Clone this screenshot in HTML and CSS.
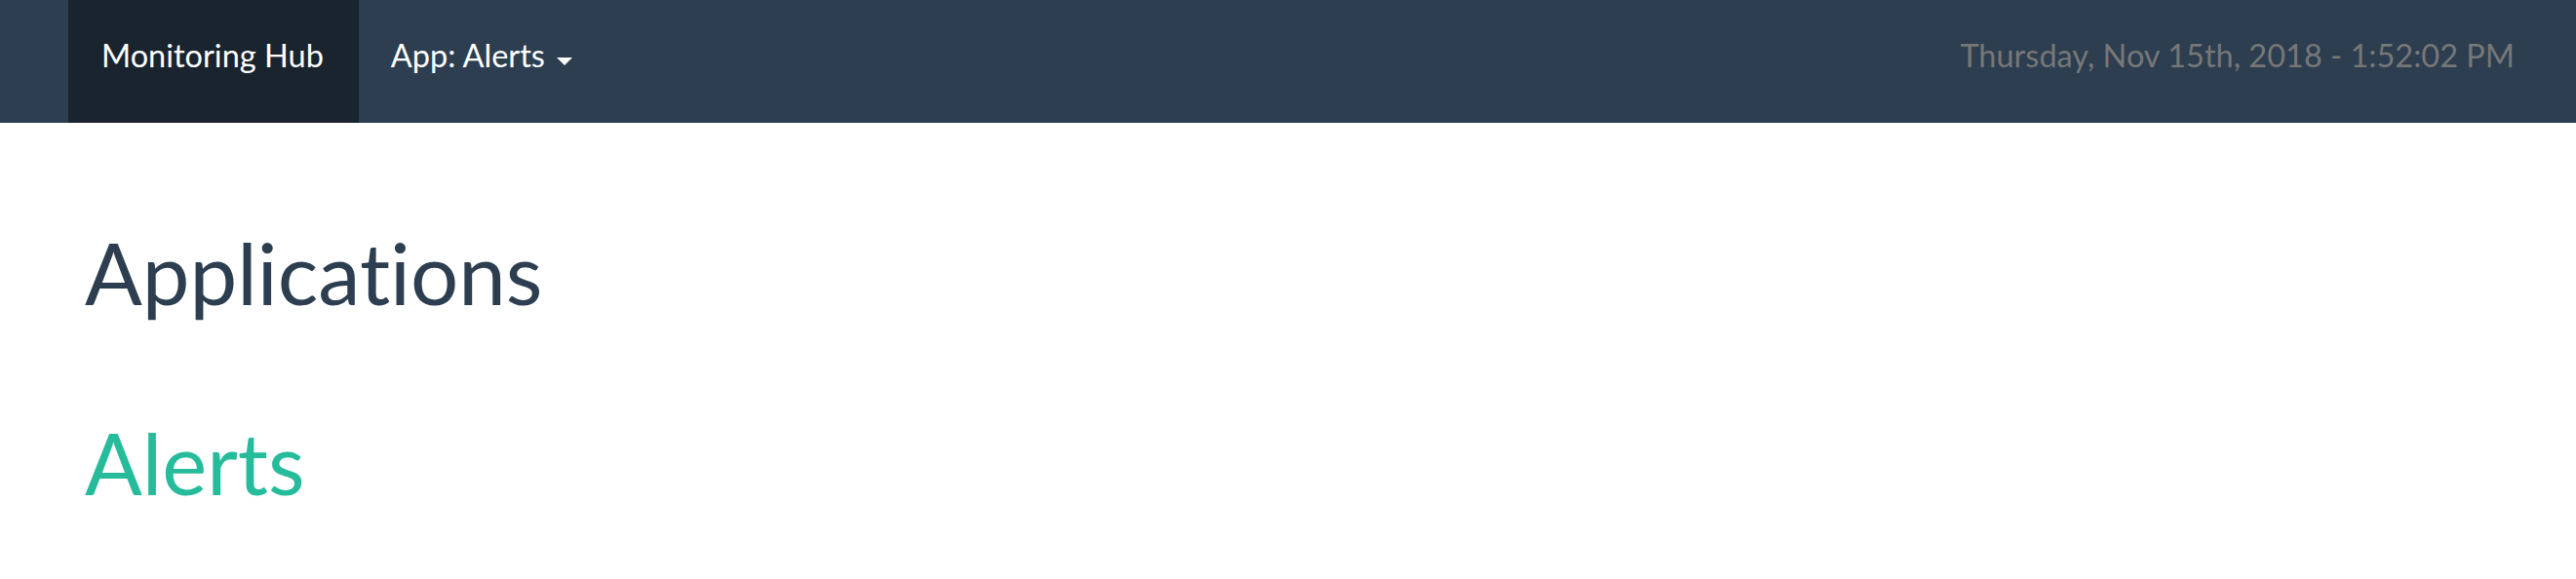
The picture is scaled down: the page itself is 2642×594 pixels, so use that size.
FILE: index.html
```html
<!DOCTYPE html>
<html lang="en">
<head>
<meta charset="utf-8">
<title>Monitoring Hub</title>
<link rel="stylesheet" href="styles.css">
</head>
<body>
<nav class="navbar">
  <a class="brand" href="#">Monitoring Hub</a>
  <a class="nav-link" href="#">App: Alerts <span class="caret"></span></a>
  <div class="spacer"></div>
  <div class="clock">Thursday, Nov 15th, 2018 - 1:52:02 PM</div>
</nav>
<main class="content">
  <h1 class="title">Applications</h1>
  <h2 class="app">Alerts</h2>
</main>
</body>
</html>
```

FILE: styles.css
```css
* { box-sizing: border-box; }
html, body {
  margin: 0;
  padding: 0;
  background: #ffffff;
  font-family: Lato, "Open Sans", sans-serif;
  font-variant-ligatures: none;
}
.navbar {
  display: flex;
  align-items: stretch;
  height: 126px;
  background: #2c3e50;
  padding-left: 70px;
}
.brand, .nav-link, .clock {
  font-size: 32.5px;
  line-height: 42px;
  padding-top: 36px;
  text-decoration: none;
}
.brand {
  background: #1a242f;
  color: #ffffff;
  padding-left: 34px;
  padding-right: 36px;
}
.nav-link {
  color: #ffffff;
  padding-left: 33px;
  padding-right: 30px;
  display: flex;
  align-items: flex-start;
}
.caret {
  display: inline-block;
  width: 0;
  height: 0;
  margin-left: 12px;
  margin-top: 23px;
  border-top: 8px solid #ffffff;
  border-left: 8.5px solid transparent;
  border-right: 8.5px solid transparent;
}
.spacer { flex: 1; }
.clock {
  color: #777777;
  padding-right: 63px;
}
.content {
  padding-left: 87px;
  padding-top: 105.5px;
}
.title, .app {
  margin: 0;
  font-weight: 400;
  font-size: 87px;
  line-height: 95.7px;
}
.title { color: #2c3e50; }
.app {
  color: #26bc9b;
  margin-top: 100px;
}
```
